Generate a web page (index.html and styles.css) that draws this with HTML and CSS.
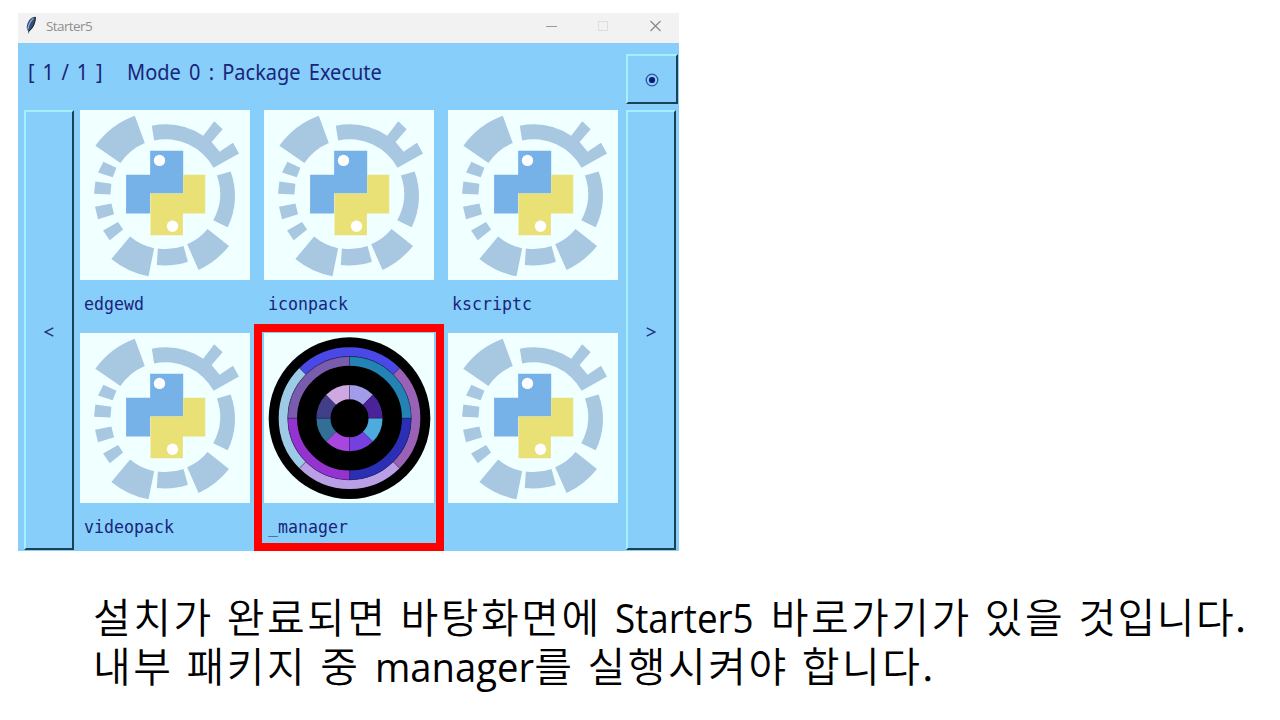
FILE: index.html
```html
<!DOCTYPE html>
<html lang="ko">
<head>
<meta charset="utf-8">
<title>Starter5</title>
<link rel="stylesheet" href="styles.css">
</head>
<body>
<svg width="0" height="0" class="defs">
  <symbol id="gear" viewBox="16 16 509 509">
    <g fill="#a8c7e1">
      <path d="M180 33L210 115A165 165 0 0 0 137 175L62 123A250 250 0 0 1 180 33Z"/>
      <path d="M231 63A207 207 0 0 1 385 93L418 50L443 74L410 112L434 141L474 114L492 146L416 189A165 165 0 0 0 238 107Z"/>
      <path d="M426 212L467 200A211 211 0 0 1 458 367L415 346A164 164 0 0 0 426 212Z"/>
      <path d="M398 372L462 423A250 250 0 0 1 371 495L337 418A164 164 0 0 0 398 372Z"/>
      <path d="M326 423L339 470A211 211 0 0 1 246 480L249 431A164 164 0 0 0 326 423Z"/>
      <path d="M238 430L221 514A250 250 0 0 1 110 462L166 395A164 164 0 0 0 238 430Z"/>
      <path d="M130 351L145 374L105 406L85 377ZM110 296L118 328L70 343L61 306ZM110 237L107 269L58 267L62 230ZM86 171L125 189L114 217L70 203Z"/>
    </g>
    <path fill="#76b1e8" d="M226 138H325V266H226V326H154V210H226Z"/>
    <path fill="#eae176" d="M325 210H391V326H324V391H227V266H325Z"/>
    <circle cx="254" cy="167" r="17" fill="#fff"/>
    <circle cx="293" cy="364" r="17" fill="#fff"/>
  </symbol>
</svg>

<main class="window">
  <header class="titlebar">
    <svg class="feather" viewBox="0 0 12 19"><path d="M10.500 .8C6 1 2 5 1.700 12L3 15L3.500 18L4.500 15C8.500 12 10.500 6 10.500 .8Z" fill="#334d74"/><path d="M8.500 2.500C5 5 3.500 9 3 13" stroke="#91acd0" stroke-width="1.400" fill="none"/><path d="M10.300 1C10.500 7 8 12 4 15" stroke="#15191f" fill="none"/></svg>
    <span class="title">Starter5</span>
    <svg class="controls" viewBox="0 0 118 14" fill="none"><path d="M1 7.500H12" stroke="#999"/><rect x="53.500" y="2.500" width="9" height="9" stroke="#ddd"/><path d="M105.500 2L115.500 12M115.500 2L105.500 12" stroke="#858585" stroke-width="1.100"/></svg>
  </header>
  <section class="client">
    <div class="head">
      <span class="page">[ 1 / 1 ]</span>
      <span class="mode">Mode 0 : Package Execute</span>
      <div class="btn menu"><svg viewBox="0 0 14 14"><circle cx="7" cy="7" r="5.800" fill="none" stroke="#33549c" stroke-width="1.300"/><circle cx="7" cy="7" r="3.100" fill="#131875"/></svg></div>
    </div>
    <div class="panel">
      <div class="btn side"><svg viewBox="0 0 10 10"><path d="M9.300 .8L1 5L9.300 9.200"/></svg></div>
      <div class="tiles">
        <div class="cell"><svg class="tile"><use href="#gear"/></svg><div class="label">edgewd</div></div>
        <div class="cell"><svg class="tile"><use href="#gear"/></svg><div class="label">iconpack</div></div>
        <div class="cell"><svg class="tile"><use href="#gear"/></svg><div class="label">kscriptc</div></div>
        <div class="cell"><svg class="tile"><use href="#gear"/></svg><div class="label">videopack</div></div>
        <div class="cell marked">
          <svg class="tile" viewBox="-256 -255 509 509">
            <circle r="242"/>
            <g fill="none">
              <g stroke-width="27">
                <path d="M-140.400-140.400A198.500 198.500 0 0 1 140.400-140.400" stroke="#4a49e8"/>
                <path d="M140.400-140.400A198.500 198.500 0 0 1 140.400 140.400" stroke="#9a62b6"/>
                <path d="M140.400 140.400A198.500 198.500 0 0 1-140.400 140.400" stroke="#b9a0e6"/>
                <path d="M-140.400 140.400A198.500 198.500 0 0 1-140.400-140.400" stroke="#9dcbe6"/>
              </g>
              <g stroke-width="28">
                <path d="M0-171A171 171 0 0 1 171 0" stroke="#2383b4"/>
                <path d="M171 0A171 171 0 0 1 0 171" stroke="#2a2fb4"/>
                <path d="M0 171A171 171 0 0 1-171 0" stroke="#9433cf"/>
                <path d="M-171 0A171 171 0 0 1 0-171" stroke="#7a5caf"/>
              </g>
              <g stroke-width="42">
                <path d="M0-78A78 78 0 0 1 55.200-55.200" stroke="#a29de8"/>
                <path d="M55.200-55.200A78 78 0 0 1 78 0" stroke="#4b2399"/>
                <path d="M78 0A78 78 0 0 1 55.200 55.200" stroke="#4dabdd"/>
                <path d="M55.200 55.200A78 78 0 0 1 0 78" stroke="#7640e0"/>
                <path d="M0 78A78 78 0 0 1-55.200 55.200" stroke="#a747e0"/>
                <path d="M-55.200 55.200A78 78 0 0 1-78 0" stroke="#326e96"/>
                <path d="M-78 0A78 78 0 0 1-55.200-55.200" stroke="#413f8a"/>
                <path d="M-55.200-55.200A78 78 0 0 1 0-78" stroke="#cea8e0"/>
              </g>
              <path stroke="#201c50" stroke-opacity=".6" stroke-width="2" d="M0-185V-157M0 157V185M-185 0H-157M157 0H185M-150-150L-131-131M150-150L131-131M-150 150L-131 131M150 150L131 131M0-99V-57M0 57V99M-99 0H-57M57 0H99"/>
              <circle r="185" stroke="#201c50" stroke-opacity=".6" stroke-width="2"/>
            </g>
          </svg>
          <div class="label">_manager</div>
        </div>
        <div class="cell"><svg class="tile"><use href="#gear"/></svg><div class="label"></div></div>
      </div>
      <div class="btn side"><svg viewBox="0 0 10 10"><path d="M.7 .8L9 5L.7 9.200"/></svg></div>
    </div>
  </section>
</main>

<div class="caption">
  <div class="line"><span>설치가</span><span>완료되면</span><span>바탕화면에</span><span class="latin starter">Starter5</span><span>바로가기가</span><span>있을</span><span class="last">것입니다.</span></div>
  <div class="line"><span>내부</span><span>패키지</span><span>중</span><span class="latin manager">manager</span><span class="joined">를</span><span>실행시켜야</span><span>합니다.</span></div>
</div>
</body>
</html>
```
FILE: styles.css
```css
*, *::after { box-sizing: border-box; }
body {
  margin: 0;
  width: 1280px;
  height: 720px;
  overflow: hidden;
  background: #fff;
  padding: 13px 0 0 18px;
  font-family: "Noto Sans", "Noto Sans CJK KR", sans-serif;
}
.defs { display: block; height: 0; }
.window { width: 661px; height: 538px; background: #87cefa; }
.titlebar {
  height: 30px;
  background: #f2f2f2;
  display: flex;
  align-items: center;
  padding: 0 16px 5px 7px;
}
.feather { width: 12px; height: 19px; }
.title { margin-left: 9px; font-size: 13.5px; line-height: 20px; letter-spacing: -0.6px; color: #8f8f8f; font-family: "Open Sans", sans-serif; }
.controls { width: 118px; height: 14px; margin-left: auto; }
.client { color: #1a2478; }
.head { height: 67px; display: flex; padding-left: 10px; font-family: "Noto Sans", sans-serif; }
.page, .mode { height: 60px; line-height: 60px; font-size: 20px; white-space: pre; word-spacing: 3px; transform: scaleY(1.06); }
.page { width: 99px; word-spacing: 2.6px; }
.btn {
  display: flex;
  align-items: center;
  justify-content: center;
  border: 2px solid;
  border-color: #a4f0ff #174352 #174352 #a4f0ff;
}
.menu { width: 52px; height: 50px; margin: 11px 1px 0 auto; }
.menu svg { width: 14px; height: 14px; margin-top: 2px; }
.panel { display: flex; padding-left: 6px; }
.side { width: 50px; height: 440px; flex: none; }
.side svg { width: 10px; height: 10px; fill: none; stroke: #263781; stroke-width: 1.5; margin-top: 3px; }
.tiles {
  display: grid;
  grid-template-columns: repeat(3, 170px);
  grid-template-rows: 223px 218px;
  column-gap: 14px;
  margin: 0 8px 0 6px;
}
.cell { position: relative; }
.tile { display: block; width: 170px; height: 170px; background: #f0ffff; }
.label { padding-left: 4px; font: 16.6px/47px "DejaVu Sans Mono", monospace; transform: scaleY(1.1); }
.marked { z-index: 1; }
.marked::after {
  content: "";
  position: absolute;
  left: -10px;
  top: -9px;
  width: 190px;
  height: 227px;
  border: 8px solid #f00;
}
.caption { padding: 40px 0 0 75px; color: #000; font-size: 41px; letter-spacing: 2.5px; line-height: 49px; font-weight: 350; font-family: "Noto Sans CJK KR", sans-serif; }
.line { display: flex; gap: 13px; white-space: nowrap; height: 49px; }
.latin { font-family: "Open Sans", sans-serif; font-size: 40px; letter-spacing: 0; transform-origin: left center; font-weight: 400; padding-top: 2px; }
.starter { width: 143px; transform: scaleX(0.92); }
.manager { width: 159px; margin-left: 2px; transform: scaleX(0.955); }
.joined { margin-left: -13px; }
.last { letter-spacing: 1.5px; }
```
